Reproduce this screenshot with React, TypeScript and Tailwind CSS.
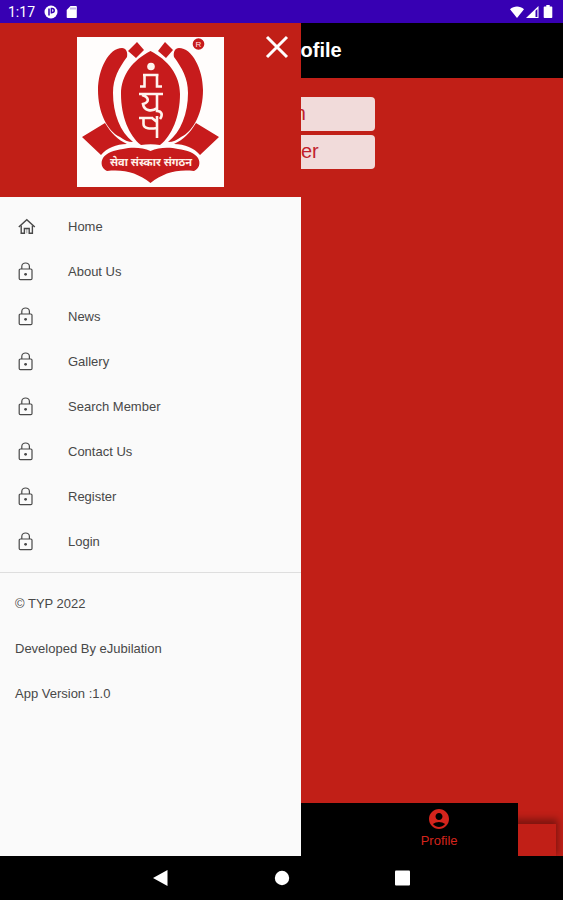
import React from 'react';
import { MdAccountCircle } from 'react-icons/md';

const MENU_ITEMS = ['Home', 'About Us', 'News', 'Gallery', 'Search Member', 'Contact Us', 'Register', 'Login'];

const FOOTER_LINES = ['© TYP 2022', 'Developed By eJubilation', 'App Version :1.0'];

function HomeIcon() {
  return (
    <svg viewBox="0 0 18 18" className="h-[18px] w-[18px]" fill="none" stroke="currentColor" strokeWidth="1.4">
      <path d="M.8 9 8.800 1.800 16.800 9" />
      <path d="M3.200 7.600V15.300h3.200V10.500h4.800v4.800h3.200V7.600" />
      <path d="M8.800 10.500v4.800" strokeWidth=".5" />
    </svg>
  );
}

function LockIcon() {
  return (
    <svg viewBox="0 0 16 20" className="h-5 w-4" fill="none" stroke="currentColor" strokeWidth="1.2">
      <rect x="1.200" y="7" width="12.800" height="10.600" rx="1.200" />
      <path d="M3.800 7V4.400a3.800 3.400 0 0 1 7.600 0V7" />
      <circle cx="7.600" cy="12.300" r="1.400" fill="currentColor" stroke="none" />
    </svg>
  );
}

function Logo() {
  return (
    <svg viewBox="0 0 147 150" className="h-[150px] w-[147px] bg-[#fffdfc]" role="img" aria-label="TYP">
      <g fill="#c71b1c">
        {/* Petals */}
        <path d="M45 11C32 11 21 32 21 53c0 22 9 41 22 47 4 3 8 5 13 5C43 95 36 76 36 56c0-15 6-25 14-36 1-5-1-9-5-9Z" />
        <path d="M102 11c13 0 24 21 24 42 0 22-9 41-22 47-4 3-8 5-13 5 13-10 20-29 20-49 0-15-6-25-14-36-1-5 1-9 5-9Z" />
        <path d="M73.500 14C56 23 44 38 44 57c0 22 8 42 20 51 6-1 13-1 19 0 12-9 20-29 20-51 0-19-12-34-29.500-43Z" />
        <path d="m60 5 7 8-8 8-8-7ZM88 5l8 8-7 8-8-7Z" />
        {/* Side leaves */}
        <path d="M28 86 5 100l19 18c6-7 15-11 26-11-9-4-16-11-22-21ZM119 86l23 14-19 18c-6-7-15-11-26-11 9-4 16-11 22-21Z" />
        {/* Base */}
        <path d="M73.500 114C65 110 54 110 46 112c-9 1-17 4-20 9-3 5-1 11 4 13 17-2 31 2 43.500 12C86 136 100 132 117 134c5-2 7-8 4-13-3-5-11-8-20-9-8-2-19-2-27.500 2Z" />
        <circle cx="121.500" cy="7" r="5.800" />
      </g>
      <text x="121.500" y="10" textAnchor="middle" className="fill-red-100 font-['Liberation_Sans'] text-[8px]">
        R
      </text>
      {/* Centre monogram */}
      <g fill="none" stroke="#fff4ee" strokeWidth="2.600">
        <circle cx="74" cy="29.500" r="3.800" fill="#fff4ee" stroke="none" />
        <path d="M66 38h15.500M67.500 38v11.500H63M80 38v11.500h5" />
        <path d="M62 57h24M65 58c7 2 8 7 1 9 1 7 9 8 14 4M80 57v17c5 0 6 4 3 8" />
        <path d="M62 81h14M66.500 81v6c0 5 7 5 13.500 4M80 79v22M75 81l5 4" />
      </g>
      <text
        x="74"
        y="129"
        textAnchor="middle"
        className="fill-[#fff0e8] font-['Noto_Sans_Devanagari','Noto_Sans',sans-serif] text-[11px] font-bold"
      >
        सेवा संस्कार संगठन
      </text>
    </svg>
  );
}

function StatusBar() {
  return (
    <div className="flex h-[23px] items-center justify-between bg-[#3700b3] px-2 text-white">
      <div className="flex items-center gap-2">
        <span className="w-7 font-[Roboto] text-sm">1:17</span>
        <svg viewBox="0 0 14 14" className="h-3.5 w-3.5">
          <circle cx="7" cy="7" r="6.500" fill="white" />
          <path d="M5 10.500V3.500M7.400 8.500v-5h.8a2 2 0 0 1 0 4H7.400" fill="none" stroke="#3700b3" strokeWidth="1.500" />
        </svg>
        <svg viewBox="0 0 12 14" className="h-3.5 w-3">
          <path d="M4.500 1H10q.8 0 .8.800v10.400q0 .800-.8.800H1.500q-.8 0-.8-.8V5Z" fill="white" />
          <path d="M5 2.500v2M7 2.500v2M9 2.500v2" stroke="#3700b3" strokeWidth=".6" />
        </svg>
      </div>
      <div className="flex items-center gap-0.5">
        <svg viewBox="0 0 14 12" className="h-3 w-3.5">
          <path d="M0 3.200C4-.4 10-.4 14 3.200L7 12Z" fill="white" />
        </svg>
        <svg viewBox="0 0 13 12" className="h-3 w-[13px]">
          <path d="M0 12 12.500 0v12Z" fill="white" />
          <path d="M9.500 4.800 11.400 3v8H9.500Z" fill="#3700b3" />
        </svg>
        <svg viewBox="0 0 14 14" className="h-3.5 w-3.5">
          <path d="M5.300 0h3.400v1.500h1.800q.8 0 .8.800v10q0 .8-.8.800h-7q-.8 0-.8-.8v-10q0-.8.8-.8h1.800Z" fill="white" />
        </svg>
      </div>
    </div>
  );
}

function ProfilePage() {
  return (
    <div className="flex flex-1 flex-col bg-[#c11f17]">
      <header className="flex h-[55px] items-center justify-center bg-black pb-0.5 pl-2">
        <h1 className="text-xl font-bold text-white">User Profile</h1>
      </header>
      <div className="mx-auto mt-[19px] flex w-1/3 flex-col gap-1 text-xl text-[#c11f2b]">
        <button type="button" className="h-[34px] rounded bg-[#f1dbda] pb-0.5">Login</button>
        <button type="button" className="h-[34px] rounded bg-[#f1dbda] pb-0.5">Register</button>
      </div>
      <div className="relative mt-auto h-[53px]">
        <div className="absolute bottom-0 right-[7px] h-8 w-20 bg-[#c11f17] shadow-[0_-3px_7px_2px_rgba(0,0,0,0.35)]" />
        <nav className="relative mx-auto grid h-full w-[84%] grid-cols-3 bg-black">
          <a href="#profile" className="col-start-3 flex flex-col items-center pt-1 text-[13px] text-[#d4241c]">
            <MdAccountCircle className="h-6 w-6" />
            Profile
          </a>
        </nav>
      </div>
    </div>
  );
}

function Drawer() {
  return (
    <aside className="absolute inset-y-0 left-0 w-[301px] bg-[#fafafa] text-[13px] text-[#484848]">
      <div className="relative flex h-[174px] items-center justify-center bg-[#c11f17] pt-1">
        <Logo />
        <button type="button" aria-label="Close menu" className="absolute right-3 top-3 text-white">
          <svg viewBox="0 0 24 24" className="h-6 w-6" stroke="currentColor" strokeWidth="3">
            <path d="m2 2 20 20M22 2 2 22" />
          </svg>
        </button>
      </div>
      <ul className="border-b border-[#dedede] pb-2 pt-[7px]">
        {MENU_ITEMS.map((item) => (
          <li key={item}>
            <a href="#menu" className="flex h-[45px] items-center pl-[18px]">
              <span className="w-[50px]">{item === 'Home' ? <HomeIcon /> : <LockIcon />}</span>
              {item}
            </a>
          </li>
        ))}
      </ul>
      <div className="py-2 pl-[15px]">
        {FOOTER_LINES.map((line) => (
          <p key={line} className="flex h-[45px] items-center">{line}</p>
        ))}
      </div>
    </aside>
  );
}

function NavigationBar() {
  return (
    <div className="relative flex h-11 items-center justify-center gap-[97px] bg-black text-white">
      <button type="button" aria-label="Back">
        <svg viewBox="0 0 24 24" className="h-6 w-6" fill="currentColor">
          <path d="M4 12 18.500 4v16Z" />
        </svg>
      </button>
      <button type="button" aria-label="Home screen">
        <svg viewBox="0 0 24 24" className="h-6 w-6" fill="currentColor">
          <circle cx="12" cy="12" r="7.200" />
        </svg>
      </button>
      <button type="button" aria-label="Recent apps">
        <svg viewBox="0 0 24 24" className="h-6 w-6" fill="currentColor">
          <rect x="4" y="4.500" width="15" height="15" rx="1" />
        </svg>
      </button>
    </div>
  );
}

export default function App() {
  return (
    <div className="flex min-h-screen flex-col font-['Liberation_Sans',sans-serif]">
      <StatusBar />
      <main className="relative flex flex-1 flex-col">
        <ProfilePage />
        <Drawer />
      </main>
      <NavigationBar />
    </div>
  );
}
